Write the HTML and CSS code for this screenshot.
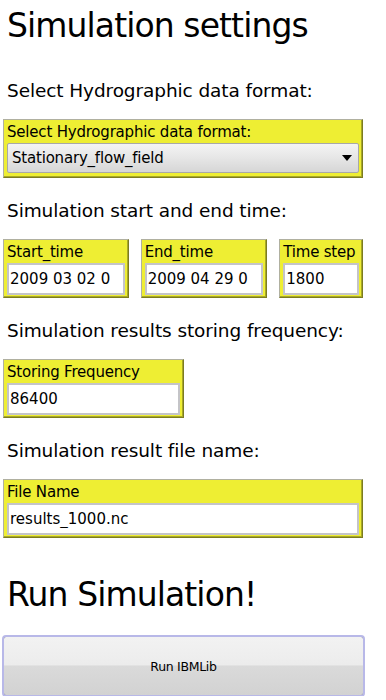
FILE: index.html
```html
<!DOCTYPE html>
<html lang="en">
<head>
    <meta charset="UTF-8">
    <meta name="viewport" content="width=device-width, initial-scale=1.0">
    <title>Simulation settings</title>
    <link rel="stylesheet" href="styles.css">
</head>
<body>
    <div class="settings">
        <h1>Simulation settings</h1>

        <p class="section-label">Select Hydrographic data format:</p>
        <div class="field wide">
            <span class="field-label">Select Hydrographic data format:</span>
            <div class="select">
                <span>Stationary_flow_field</span>
                <span class="arrow"></span>
            </div>
        </div>

        <p class="section-label">Simulation start and end time:</p>
        <div class="field-row">
            <div class="field start">
                <span class="field-label">Start_time</span>
                <input type="text" value="2009 03 02 0">
            </div>
            <div class="field end">
                <span class="field-label">End_time</span>
                <input type="text" value="2009 04 29 0">
            </div>
            <div class="field step">
                <span class="field-label">Time step</span>
                <input type="text" value="1800">
            </div>
        </div>

        <p class="section-label">Simulation results storing frequency:</p>
        <div class="field freq">
            <span class="field-label">Storing Frequency</span>
            <input type="text" value="86400">
        </div>

        <p class="section-label">Simulation result file name:</p>
        <div class="field wide">
            <span class="field-label">File Name</span>
            <input type="text" value="results_1000.nc">
        </div>

        <h1 class="run-title">Run Simulation!</h1>
        <button class="run-button">Run IBMLib</button>
    </div>
</body>
</html>
```

FILE: styles.css
```css
body {
    margin: 0;
    background-color: #fff;
    font-family: "DejaVu Sans", Verdana, sans-serif;
    color: #000;
}

.settings {
    padding: 0 0 0 3px;
    width: 360px;
}

h1 {
    margin: 0;
    padding: 1px 0 0 4px;
    height: 57px;
    font-size: 33px;
    font-weight: normal;
    line-height: 50px;
    letter-spacing: -0.9px;
}

.section-label {
    margin: 0;
    padding: 4px 0 0 4px;
    height: 57px;
    line-height: 57px;
    font-size: 18.5px;
    letter-spacing: -0.1px;
}

.field {
    box-sizing: border-box;
    height: 59px;
    padding: 0 3px 3px 3px;
    background-color: #eeee33;
    border: 1px solid;
    border-color: #b0b0a0 #7c7c20 #7c7c20 #b0b0a0;
    box-shadow: inset -1px -1px 0 #a8a828;
}

.wide {
    width: 360px;
}

.field-label {
    display: block;
    height: 23px;
    line-height: 25px;
    font-size: 15px;
    letter-spacing: -0.2px;
    white-space: nowrap;
}

.field input {
    box-sizing: border-box;
    display: block;
    width: 100%;
    height: 32px;
    margin: 0;
    padding: 0 1px;
    border: 2px solid #c4c4c8;
    background-color: #fff;
    font-family: "DejaVu Sans", Verdana, sans-serif;
    font-size: 15px;
    color: #000;
}

.select {
    box-sizing: border-box;
    display: flex;
    align-items: center;
    justify-content: space-between;
    height: 30px;
    padding: 0 6px 0 4px;
    border: 1px solid #a8a8a8;
    border-radius: 2px;
    background: linear-gradient(#f4f4f4, #e6e6e6 50%, #d6d6d6);
    font-size: 15px;
    letter-spacing: -0.2px;
}

.arrow {
    width: 0;
    height: 0;
    border-left: 5px solid transparent;
    border-right: 5px solid transparent;
    border-top: 6px solid #000;
}

.field-row {
    display: flex;
    gap: 12px;
}

.start {
    width: 126px;
}

.end {
    width: 127px;
}

.step {
    width: 84px;
}

.freq {
    width: 181px;
}

.run-title {
    height: 82px;
    padding-top: 16px;
    line-height: 82px;
}

.run-button {
    box-sizing: border-box;
    display: block;
    width: 361px;
    height: 60px;
    margin: 0;
    border: 1px solid #8c8c8c;
    border-radius: 3px;
    outline: 2px solid #b8b8e8;
    outline-offset: -1px;
    background: linear-gradient(#f2f2f2 0%, #ececec 48%, #dadada 50%, #d2d2d2 100%);
    font-family: "DejaVu Sans", Verdana, sans-serif;
    font-size: 12.5px;
    letter-spacing: -0.3px;
    color: #000;
}
```
